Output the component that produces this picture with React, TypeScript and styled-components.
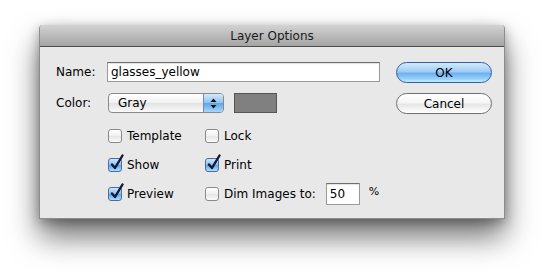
import React from "react";
import styled, { createGlobalStyle } from "styled-components";

const GlobalStyle = createGlobalStyle`
  html, body {
    margin: 0;
    padding: 0;
    background: #ffffff;
  }
  body {
    font-family: "DejaVu Sans", "Liberation Sans", sans-serif;
    font-size: 12px;
    color: #000;
  }
`;

const Page = styled.div`
  width: 546px;
  height: 274px;
  padding: 25px 0 0 39px;
  box-sizing: border-box;
  overflow: hidden;
`;

const Window = styled.div`
  width: 466px;
  height: 194px;
  box-sizing: border-box;
  background: #e8e8e8;
  border: 1px solid #8c8c8c;
  border-top: none;
  border-radius: 4px 4px 0 0;
  box-shadow: 0 18px 30px rgba(0, 0, 0, 0.55), 0 3px 12px rgba(0, 0, 0, 0.3);
  display: flex;
  flex-direction: column;
`;

const TitleBar = styled.div`
  height: 22px;
  box-sizing: border-box;
  border-radius: 4px 4px 0 0;
  background: linear-gradient(#d2d2d2, #a4a4a4);
  border-bottom: 1px solid #4c4c4c;
  display: flex;
  align-items: center;
  justify-content: center;
  font-size: 12px;
  color: #1a1a1a;
  padding-top: 1px;
`;

const Body = styled.div`
  flex: 1;
  display: flex;
  padding: 15px 12px 0 16px;
`;

const Form = styled.div`
  display: flex;
  flex-direction: column;
`;

const FieldRow = styled.div<{ $top?: number }>`
  display: flex;
  align-items: center;
  height: 20px;
  margin-top: ${(p) => p.$top ?? 0}px;
`;

const Label = styled.span`
  width: 51px;
  flex-shrink: 0;
`;

const TextField = styled.div<{ $width: number; $height?: number }>`
  width: ${(p) => p.$width}px;
  height: ${(p) => p.$height ?? 20}px;
  box-sizing: border-box;
  background: #fff;
  border: 1px solid #9a9a9a;
  border-top-color: #6e6e6e;
  box-shadow: inset 0 1px 1px rgba(0, 0, 0, 0.12);
  display: flex;
  align-items: center;
  padding-left: 3px;
`;

const Select = styled.div`
  width: 116px;
  height: 20px;
  margin-left: 1px;
  box-sizing: border-box;
  border: 1px solid #8a8a8a;
  border-radius: 4px;
  background: linear-gradient(#ffffff, #f1f1f1 50%, #e2e2e2 51%, #fafafa);
  display: flex;
  align-items: center;
  overflow: hidden;
`;

const SelectText = styled.span`
  flex: 1;
  padding-left: 9px;
`;

const SelectArrows = styled.span`
  width: 19px;
  height: 100%;
  border-left: 1px solid #6a8fbf;
  background: linear-gradient(#d2e8fb, #8fc2f0 50%, #5fa4e6 51%, #a9d6fb);
  display: flex;
  align-items: center;
  justify-content: center;
`;

const Swatch = styled.div`
  width: 43px;
  height: 20px;
  margin-left: 10px;
  box-sizing: border-box;
  background: #808080;
  border: 1px solid #555;
`;

const CheckGrid = styled.div`
  margin-top: 8px;
  margin-left: 52px;
  display: grid;
  grid-template-columns: 97px auto;
  grid-auto-rows: 29px;
`;

const CheckItem = styled.label`
  display: flex;
  align-items: center;
  gap: 5px;
`;

const Box = styled.span<{ $checked?: boolean }>`
  position: relative;
  width: 14px;
  height: 14px;
  box-sizing: border-box;
  border-radius: 3px;
  border: 1px solid ${(p) => (p.$checked ? "#4a6f9e" : "#8a8a8a")};
  background: ${(p) =>
    p.$checked
      ? "linear-gradient(#cfe6fb, #8cc0ef 50%, #5ea3e6 51%, #b4dcfb)"
      : "linear-gradient(#ffffff, #f0f0f0 50%, #e4e4e4 51%, #fbfbfb)"};
  flex-shrink: 0;
`;

const Check = styled.svg`
  position: absolute;
  left: 1px;
  top: -5px;
`;

const DimRow = styled.div`
  display: flex;
  align-items: center;
  gap: 10px;
`;

const Percent = styled.span`
  margin-left: -1px;
  margin-top: -4px;
  font-size: 11px;
`;

const Buttons = styled.div`
  margin-left: auto;
  display: flex;
  flex-direction: column;
  gap: 10px;
`;

const Button = styled.div<{ $primary?: boolean }>`
  width: 96px;
  height: 21px;
  box-sizing: border-box;
  border-radius: 11px;
  border: 1px solid ${(p) => (p.$primary ? "#2f5f9e" : "#6f6f6f")};
  background: ${(p) =>
    p.$primary
      ? "linear-gradient(#d4eafc, #9fcdf5 45%, #6eb1ee 55%, #9ad2fb 85%, #c8ecff)"
      : "linear-gradient(#ffffff, #f6f6f6 45%, #e6e6e6 55%, #f8f8f8 85%, #ffffff)"};
  display: flex;
  align-items: center;
  justify-content: center;
  font-size: 12px;
  color: #000;
`;

function CheckBox({ label, checked }: { label: string; checked?: boolean }) {
  return (
    <CheckItem>
      <Box $checked={checked}>
        {checked && (
          <Check width="14" height="17" viewBox="0 0 14 17">
            <path
              d="M2 10.5 L5 14 L12.5 1.5"
              fill="none"
              stroke="#10183a"
              strokeWidth="2.4"
              strokeLinecap="round"
              strokeLinejoin="round"
            />
          </Check>
        )}
      </Box>
      <span>{label}</span>
    </CheckItem>
  );
}

export default function App() {
  return (
    <Page>
      <GlobalStyle />
      <Window>
        <TitleBar>Layer Options</TitleBar>
        <Body>
          <Form>
            <FieldRow>
              <Label>Name:</Label>
              <TextField $width={273}>glasses_yellow</TextField>
            </FieldRow>
            <FieldRow $top={11}>
              <Label>Color:</Label>
              <Select>
                <SelectText>Gray</SelectText>
                <SelectArrows>
                  <svg width="7" height="11" viewBox="0 0 7 11">
                    <path d="M3.5 0.5 L6.5 4 L0.5 4 Z" fill="#111" />
                    <path d="M3.5 10.5 L6.5 7 L0.5 7 Z" fill="#111" />
                  </svg>
                </SelectArrows>
              </Select>
              <Swatch />
            </FieldRow>
            <CheckGrid>
              <CheckBox label="Template" />
              <CheckBox label="Lock" />
              <CheckBox label="Show" checked />
              <CheckBox label="Print" checked />
              <CheckBox label="Preview" checked />
              <DimRow>
                <CheckBox label="Dim Images to:" />
                <TextField $width={34} $height={22}>50</TextField>
                <Percent>%</Percent>
              </DimRow>
            </CheckGrid>
          </Form>
          <Buttons>
            <Button $primary>OK</Button>
            <Button>Cancel</Button>
          </Buttons>
        </Body>
      </Window>
    </Page>
  );
}
